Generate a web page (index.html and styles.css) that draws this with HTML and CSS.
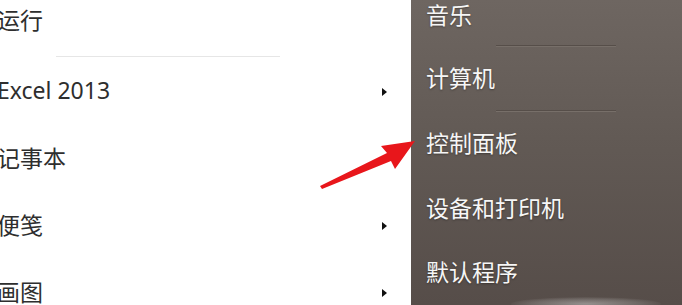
FILE: index.html
```html
<!DOCTYPE html>
<html lang="zh-CN">
<head>
<meta charset="utf-8">
<title>开始菜单</title>
<link rel="stylesheet" href="styles.css">
</head>
<body>
<div class="menu">
  <div class="left">
    <div class="item item-first"><span class="label">运行</span></div>
    <div class="sep-light"></div>
    <div class="item"><span class="label">Excel 2013</span><span class="caret"></span></div>
    <div class="item"><span class="label">记事本</span></div>
    <div class="item"><span class="label">便笺</span><span class="caret"></span></div>
    <div class="item"><span class="label">画图</span><span class="caret"></span></div>
  </div>
  <div class="right">
    <div class="ritem r1">音乐</div>
    <div class="sep-dark"></div>
    <div class="ritem r2">计算机</div>
    <div class="sep-dark"></div>
    <div class="ritem r3">控制面板</div>
    <div class="ritem r4">设备和打印机</div>
    <div class="ritem r5">默认程序</div>
    <div class="glow"></div>
  </div>
  <svg class="arrow" width="682" height="305" viewBox="0 0 682 305">
    <polygon points="320,186 322,189 391,161 395,169 415,141 381,146 387,153" fill="#e8161b"/>
  </svg>
</div>
</body>
</html>
```

FILE: styles.css
```css
html, body {
  margin: 0;
  padding: 0;
  background: #ffffff;
}

.menu {
  position: relative;
  display: flex;
  width: 682px;
  height: 305px;
  overflow: hidden;
  font-family: "Noto Sans", "Noto Sans CJK SC", sans-serif;
}

.left {
  width: 411px;
  flex: none;
  background: #ffffff;
  color: #2e2e2e;
}

.item {
  display: flex;
  align-items: center;
  box-sizing: border-box;
  height: 67px;
  padding-bottom: 3px;
  font-size: 23px;
}

.item-first {
  height: 40px;
}

.label {
  margin-left: -3px;
  flex: 1;
}

.caret {
  width: 0;
  height: 0;
  margin-right: 24px;
  margin-top: 3px;
  border-top: 4px solid transparent;
  border-bottom: 4px solid transparent;
  border-left: 5px solid #111111;
}

.sep-light {
  height: 1px;
  margin: 16px 131px 1px 56px;
  background: #e6e6e6;
}

.right {
  position: relative;
  flex: 1;
  background: linear-gradient(to bottom, #6e6661 0%, #625a55 45%, #564d49 100%);
  color: #f6f6f6;
  font-size: 23px;
  text-shadow: 0 1px 2px rgba(0, 0, 0, 0.35);
  padding-left: 15px;
}

.ritem {
  display: flex;
  align-items: center;
  box-sizing: border-box;
  padding-bottom: 4px;
}

.r1 { height: 32px; }
.r2 { height: 63px; }
.r3 { height: 64px; }
.r4 { height: 66px; }
.r5 { height: 58px; padding-bottom: 0; }

.sep-dark {
  height: 1px;
  margin: 13px 0 1px 70px;
  width: 120px;
  background: #564e49;
  box-shadow: 0 1px 0 #776f69;
}

.r2 + .sep-dark {
  margin-top: 0;
}

.glow {
  position: absolute;
  left: 100px;
  bottom: -6px;
  width: 150px;
  height: 14px;
  border-radius: 50%;
  background: radial-gradient(ellipse at center, rgba(225, 225, 225, 0.45) 0%, rgba(210, 210, 210, 0.2) 50%, rgba(200, 200, 200, 0) 75%);
}

.arrow {
  position: absolute;
  left: 0;
  top: 0;
  pointer-events: none;
}
```
